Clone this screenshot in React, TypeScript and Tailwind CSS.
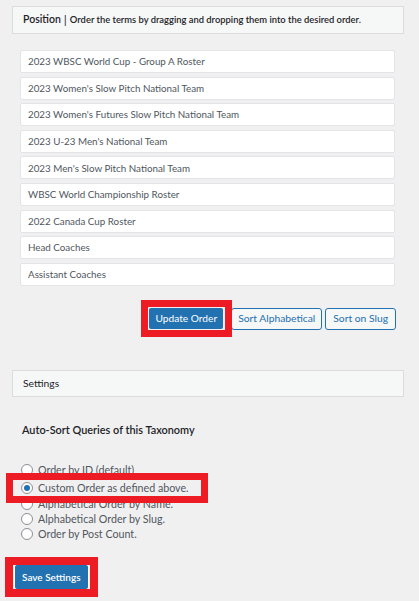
import React from "react";

const items = [
  "2023 WBSC World Cup - Group A Roster",
  "2023 Women's Slow Pitch National Team",
  "2023 Women's Futures Slow Pitch National Team",
  "2023 U-23 Men's National Team",
  "2023 Men's Slow Pitch National Team",
  "WBSC World Championship Roster",
  "2022 Canada Cup Roster",
  "Head Coaches",
  "Assistant Coaches",
];

function Radio({ checked }: { checked?: boolean }) {
  return (
    <span className="flex h-[12px] w-[12px] shrink-0 items-center justify-center rounded-full border border-[#8c8f94] bg-white">
      {checked && <span className="h-[6px] w-[6px] rounded-full bg-[#2271b1]" />}
    </span>
  );
}

export default function App() {
  return (
    <div
      className="min-h-[601px] w-[419px] overflow-hidden bg-[#f0f0f1] text-[10px] text-[#3c434a]"
      style={{ fontFamily: 'Lato, "Open Sans", sans-serif' }}
    >
      <div className="pt-[6px] px-[12px] pr-[15px]">
        <div className="flex h-[28px] items-center whitespace-nowrap border border-[#dcdcde] bg-[#f6f7f7] pl-[10px] text-[#1d2327]">
          <span className="text-[10.5px] font-semibold">Position</span>
          <span className="mx-[3px] text-[12px]">|</span>
          <span className="text-[9.4px] font-semibold">
            Order the terms by dragging and dropping them into the desired order.
          </span>
        </div>

        <div className="mt-[16px] flex flex-col gap-[3.6px] pl-[8px] pr-[9px]">
          {items.map((t) => (
            <div
              key={t}
              className="flex h-[23px] items-center rounded-[2px] border border-[#e2e4e7] bg-white pl-[7px] text-[9.8px] text-[#50575e]"
            >
              {t}
            </div>
          ))}
        </div>

        <div className="mt-[22px] flex justify-end pr-[8px]">
          <div className="relative mr-[8px]">
            <button className="flex h-[21px] items-center rounded-[2px] bg-[#2271b1] px-[6px] text-[10.2px] text-white">
              Update Order
            </button>
            <div className="pointer-events-none absolute -left-[8px] -right-[9px] -top-[8px] -bottom-[7px] border-[7px] border-[#ed1c24]" />
          </div>
          <button className="flex h-[22px] items-center rounded-[3px] border border-[#2271b1] bg-[#f6f7f7] px-[6px] text-[10.3px] text-[#2271b1]">
            Sort Alphabetical
          </button>
          <button className="ml-[3px] flex h-[22px] items-center rounded-[3px] border border-[#2271b1] bg-[#f6f7f7] px-[7px] text-[10.3px] text-[#2271b1]">
            Sort on Slug
          </button>
        </div>

        <div className="mt-[40px] flex h-[27px] items-center border border-[#dcdcde] bg-[#f6f7f7] pl-[10px] text-[10.3px] text-[#1d2327]">
          Settings
        </div>
      </div>

      <div className="mt-[25px] pl-[22px] text-[10.9px] font-semibold text-[#1d2327]">
        Auto-Sort Queries of this Taxonomy
      </div>

      <div className="mt-[24px] flex flex-col pl-[21px] text-[10.7px] text-[#50575e]">
        <div className="flex h-[16px] items-center gap-[5px]">
          <Radio />
          <span>Order by ID (default)</span>
        </div>
        <div className="relative mt-[2px] flex h-[16px] items-center gap-[5px]">
          <Radio checked />
          <span>Custom Order as defined above.</span>
          <div className="pointer-events-none absolute -left-[15px] -top-[7px] -bottom-[7px] w-[202px] border-[7px] border-[#ed1c24]" />
        </div>
        <div className="flex h-[15px] items-center gap-[5px]">
          <Radio />
          <span>Alphabetical Order by Name.</span>
        </div>
        <div className="flex h-[15px] items-center gap-[5px]">
          <Radio />
          <span>Alphabetical Order by Slug.</span>
        </div>
        <div className="flex h-[15px] items-center gap-[5px]">
          <Radio />
          <span>Order by Post Count.</span>
        </div>
      </div>

      <div className="mt-[23px] pl-[14px]">
        <div className="relative inline-block">
          <button className="flex h-[26px] items-center rounded-[3px] border border-white bg-[#2271b1] px-[7px] text-[10px] font-semibold text-white">
            Save Settings
          </button>
          <div className="pointer-events-none absolute -left-[9px] -right-[9px] -top-[7px] -bottom-[7px] border-[8px] border-[#ed1c24]" />
        </div>
      </div>
    </div>
  );
}
